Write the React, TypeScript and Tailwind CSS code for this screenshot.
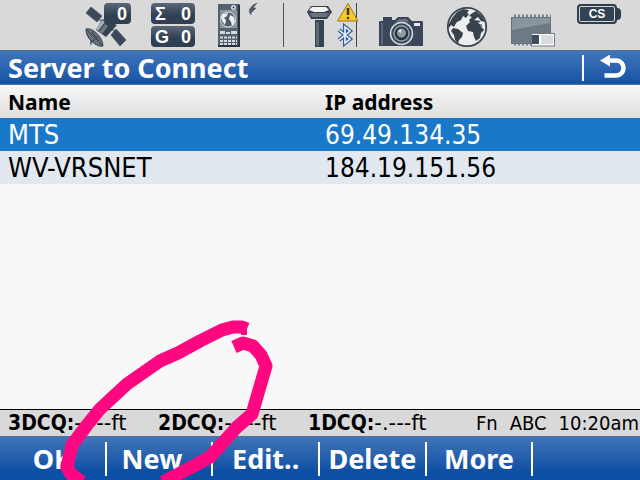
import React, { useState } from 'react';

const servers = [
  { name: 'MTS', ip: '69.49.134.35' },
  { name: 'WV-VRSNET', ip: '184.19.151.56' },
];

const readings = ['3DCQ:', '2DCQ:', '1DCQ:'];

const actions = ['OK', 'New..', 'Edit..', 'Delete', 'More'];

const badge =
  'flex h-[21px] items-center justify-between rounded-sm bg-linear-to-b from-[#5b6878] to-[#303f51] to-60% font-["Liberation_Sans"] text-lg font-bold leading-none text-white';

// Satellite with the tracked satellite count on top
const SatelliteIcon = () => (
  <div className="relative shrink-0">
    <svg width="46" height="50" viewBox="85 0 46 50">
      <path d="M95 16l26 20" stroke="#7d838c" strokeWidth="2" />
      <path d="M91 7l11 9-5 6-11-9z" fill="#3b4859" stroke="#59616d" />
      <path d="M116 29l10 11-6 6-9-11z" fill="#3b4859" stroke="#59616d" />
      <path d="M102 19l15 6-11 12-10-7z" fill="#35424f" />
      <path d="M102 20l3 2-7 9-2-2z" fill="#a8adb3" />
      <path d="M105 24l3 2-6 8-3-2z" fill="#6e7883" />
      <path d="M86 29c6-2 17 8 17 17-6 2-18-8-17-17z" fill="#67717c" stroke="#35404e" />
      <path d="M87 30l15 15M90 43l8-6M91 40l0 5M92 32l7 9" stroke="#35404e" fill="none" />
    </svg>
    <span className={`${badge} absolute right-0 top-[3px] w-[27px] pl-[13px]`}>0</span>
  </div>
);

const CountBadges = () => (
  <div className="mt-[3px] flex w-11 shrink-0 flex-col gap-[2px]">
    <span className={`${badge} px-1`}><span>Σ</span><span>0</span></span>
    <span className={`${badge} px-1`}><span>G</span><span>0</span></span>
  </div>
);

const ControllerIcon = () => (
  <svg className="shrink-0" width="48" height="50" viewBox="215 0 48 50">
    <rect x="218" y="4" width="22" height="43" rx="1" fill="#536070" />
    <path d="M218 46h21V5" stroke="#27333f" strokeWidth="2" fill="none" />
    <rect x="220" y="10" width="17" height="18" fill="#8b939c" />
    <circle cx="233.500" cy="7.500" r="2.500" fill="#dfe2e5" />
    <circle cx="233.500" cy="7.500" r="1" fill="#27333f" />
    <circle cx="228" cy="19.500" r="7.500" fill="#505b66" stroke="#dfe2e5" />
    <path d="M223 14l5-1-1 3-3 2 2 2-1 5-3-4-1-4zM230 15l4 2 1 5-3 4-1-4-2-3z" fill="#eef0f2" />
    <path d="M220 31h5v3h-5zM226 32h4v2h-4zM231 31h6v3h-6z" fill="#d4d8dc" />
    <path d="M220 37.500h17M220 41h17M220 44h17" stroke="#d4d8dc" strokeWidth="2" strokeDasharray="3 1" />
    <path d="M257 3l-4 5h3l-5 5v2l-2-4 3-1h-3l4-5z" fill="#4f5964" stroke="#4f5964" strokeWidth=".6" />
  </svg>
);

const ReceiverIcon = () => (
  <svg className="shrink-0 overflow-visible" width="52" height="50" viewBox="305 0 52 50">
    <rect x="315" y="20" width="9" height="27" fill="#354252" />
    <rect x="316" y="22" width="3" height="24" fill="#5e6874" />
    <path d="M311 6h17l4 6-5 7h-16l-4-7z" fill="#344151" />
    <path d="M312 7h14l3 3-5 2h-10l-5-2z" fill="#f2f3f4" />
    <path d="M309 13h21l-4 4h-14z" fill="#697380" />
    <path d="M356.500 3v44" stroke="#3a4653" />
    <path d="M348 3.500l10 17.500h-20.500z" fill="#f7c928" stroke="#977d18" strokeLinejoin="round" />
    <path d="M348 8v7" stroke="#3a3520" strokeWidth="2.500" />
    <circle cx="348" cy="18" r="1.300" fill="#3a3520" />
    <path d="M339 30l11 9-5 4V27l5 4-11 9" stroke="#315f9e" strokeWidth="4" fill="none" />
    <path d="M339 30l11 9-5 4V27l5 4-11 9" stroke="#f1f6fc" strokeWidth="1.600" fill="none" />
  </svg>
);

const CameraIcon = () => (
  <svg className="shrink-0" width="50" height="50" viewBox="377 0 50 50">
    <path d="M383 17h9v3h3l3-3h10l4 4h10q1 0 1 1v24h-44V22q0-1 1-1h3z" fill="#3a475b" />
    <path d="M382 23v22" stroke="#59677a" strokeWidth="2" />
    <path d="M399 19h8l2 3h-13z" fill="#657181" />
    <rect x="414" y="23" width="6" height="3" fill="#e8eaed" />
    <circle cx="401.500" cy="33.500" r="11" fill="#3d4b5c" stroke="#d5d9dd" strokeWidth="1.500" />
    <circle cx="401.500" cy="33.500" r="7.500" fill="#26323e" stroke="#96a0ab" strokeWidth="1.500" />
    <circle cx="401.500" cy="33" r="4.500" fill="#909aa3" />
    <path d="M398 31l3-2v4z" fill="#eef1f3" />
  </svg>
);

const GlobeIcon = () => (
  <svg className="shrink-0" width="44" height="50" viewBox="447 0 44 50">
    <circle cx="467" cy="27" r="19.200" fill="#eceeef" stroke="#3b4650" strokeWidth="1.800" />
    <path d="M452 18l5-6 6-3 6 1-2 3 2 1-3 4-3-2-2 4-4 2-2 3-1 2-3-2-2 3-1-2z" fill="#38434e" />
    <path d="M453 28l5 1 5 4-1 4-3 3-1 4-3-4-1-5-3-4z" fill="#38434e" />
    <path d="M471 14l5-3 6 5 3 6-4-1-3 2 4 2 2 5-3 3-1 5-4 3-2-4-1-5-5-1-2-5 4-4-1-2 3-3-3-1z" fill="#38434e" />
    <path d="M474 20l4-3 3 4zM480 25l3 4 2-1z" fill="#eceeef" />
  </svg>
);

const MemoryIcon = () => (
  <svg className="shrink-0" width="46" height="50" viewBox="511 0 46 50">
    <path d="M514 16h37M514 44h18" stroke="#7b838c" strokeWidth="3" strokeDasharray="2 2" />
    <rect x="511.500" y="17.500" width="39" height="26" fill="#6d7985" stroke="#65717d" />
    <path d="M512 18h38v5l-38 7z" fill="#8b959f" />
    <rect x="531.500" y="33.500" width="23" height="12.500" fill="#fff" stroke="#727c87" />
    <rect x="532" y="35" width="7" height="9" fill="#3d4d60" />
    <rect x="541" y="35" width="12" height="9" fill="#dadcdf" />
  </svg>
);

const BatteryIcon = () => (
  <div className="mt-1 flex shrink-0 items-center">
    <span className="flex h-5 w-10 items-center justify-center rounded-sm border-2 border-[#303d4b] bg-[#334252] font-['Liberation_Sans'] text-xs font-bold text-white outline-1 -outline-offset-3 outline-[#d1d5da]">CS</span>
    <span className="h-3 w-1 rounded-r-sm bg-[#303d4b]" />
  </div>
);

const Annotation = () => (
  <svg
    className="pointer-events-none absolute bottom-0 left-0"
    width="300"
    height="170"
    viewBox="0 310 300 170"
    fill="none"
    stroke="#ff0780"
    strokeWidth="13"
    strokeLinejoin="round"
  >
    <path d="M247 329l-5-2h-9l-11 3-22 11-22 12-18 8-33 23-27 25-13 16-15 20-5 22 4 7 11 8" />
    <path d="M244 328v7" strokeWidth="6" />
    <path d="M234 347l9-4 10 3 8 9 5 11-14 48-15 13-27 30-20 11-27 14" />
  </svg>
);

export default function App() {
  const [selected, setSelected] = useState('MTS');

  return (
    <div className="relative flex min-h-screen flex-col overflow-hidden bg-[#f8f8f8] font-['DejaVu_Sans_Condensed','DejaVu_Sans',sans-serif] text-black">
      <header className="flex h-[50px] items-start gap-5 bg-[#d9d9d9] pl-[85px]">
        <SatelliteIcon />
        <CountBadges />
        <ControllerIcon />
        <span className="mr-px mt-[3px] h-11 w-px shrink-0 bg-[#4b535c]" />
        <ReceiverIcon />
        <CameraIcon />
        <GlobeIcon />
        <MemoryIcon />
        <BatteryIcon />
      </header>

      <div className="flex h-[35px] items-center justify-between border-y border-[#507098] bg-linear-to-b from-[#4175b9] to-[#1253a5] px-2 font-['Noto_Sans',sans-serif]">
        <h1 className="text-[27px] font-bold leading-8 text-white">Server to Connect</h1>
        <button type="button" aria-label="Back" className="flex h-[26px] w-[50px] items-center justify-end border-l-2 border-white pr-1">
          <svg width="28" height="26" viewBox="599 54 28 26">
            <path d="M607 59.500h8.500a7 7.500 0 0 1 0 15h-12" stroke="#fff" strokeWidth="4.500" fill="none" />
            <path d="M599 59.500l10-6v12z" fill="#fff" />
          </svg>
        </button>
      </div>

      <main className="flex-1">
        <table className="w-full table-fixed border-collapse text-left">
          <thead className="bg-linear-to-b from-[#f8f8f8] to-[#dedede] font-['Noto_Sans',sans-serif]">
            <tr className="h-[33px] text-[21px] leading-7">
              <th className="w-1/2 p-0 pl-2 font-bold">Name</th>
              <th className="p-0 pl-[5px] font-bold">IP address</th>
            </tr>
          </thead>
          <tbody>
            {servers.map(server => (
              <tr
                key={server.name}
                onClick={() => setSelected(server.name)}
                className={`h-[33px] leading-8 ${
                  server.name === selected ? 'bg-[#1a78c8] text-white' : 'bg-[#e1e8f0]'
                }`}
              >
                <td className="p-0 pl-2 text-[27px]">{server.name}</td>
                <td className="p-0 pl-[5px] text-[26px]">{server.ip}</td>
              </tr>
            ))}
          </tbody>
        </table>
      </main>

      <div className="flex h-[27px] items-center justify-between border-t border-black bg-[#d9d9d9] pl-2 text-[21px] leading-6">
        <div className="flex">
          {readings.map(label => (
            <div key={label} className="w-[150px] whitespace-nowrap">
              <b>{label}</b>
              <span className="font-['DejaVu_Sans',sans-serif]">-.---ft</span>
            </div>
          ))}
        </div>
        <div className="flex gap-3 whitespace-nowrap pr-px text-xl leading-6">
          <span>Fn</span>
          <span>ABC</span>
          <span>10:20am</span>
        </div>
      </div>

      <nav className="grid h-11 grid-cols-6 items-center border-t border-[#507098] bg-linear-to-b from-[#4175b9] to-[#0d4fa4] to-80% font-['Noto_Sans',sans-serif]">
        {actions.map(action => (
          <button
            key={action}
            type="button"
            className="h-[34px] border-r-2 border-white text-[27px] font-bold leading-8 text-white"
          >
            {action}
          </button>
        ))}
      </nav>

      <Annotation />
    </div>
  );
}
